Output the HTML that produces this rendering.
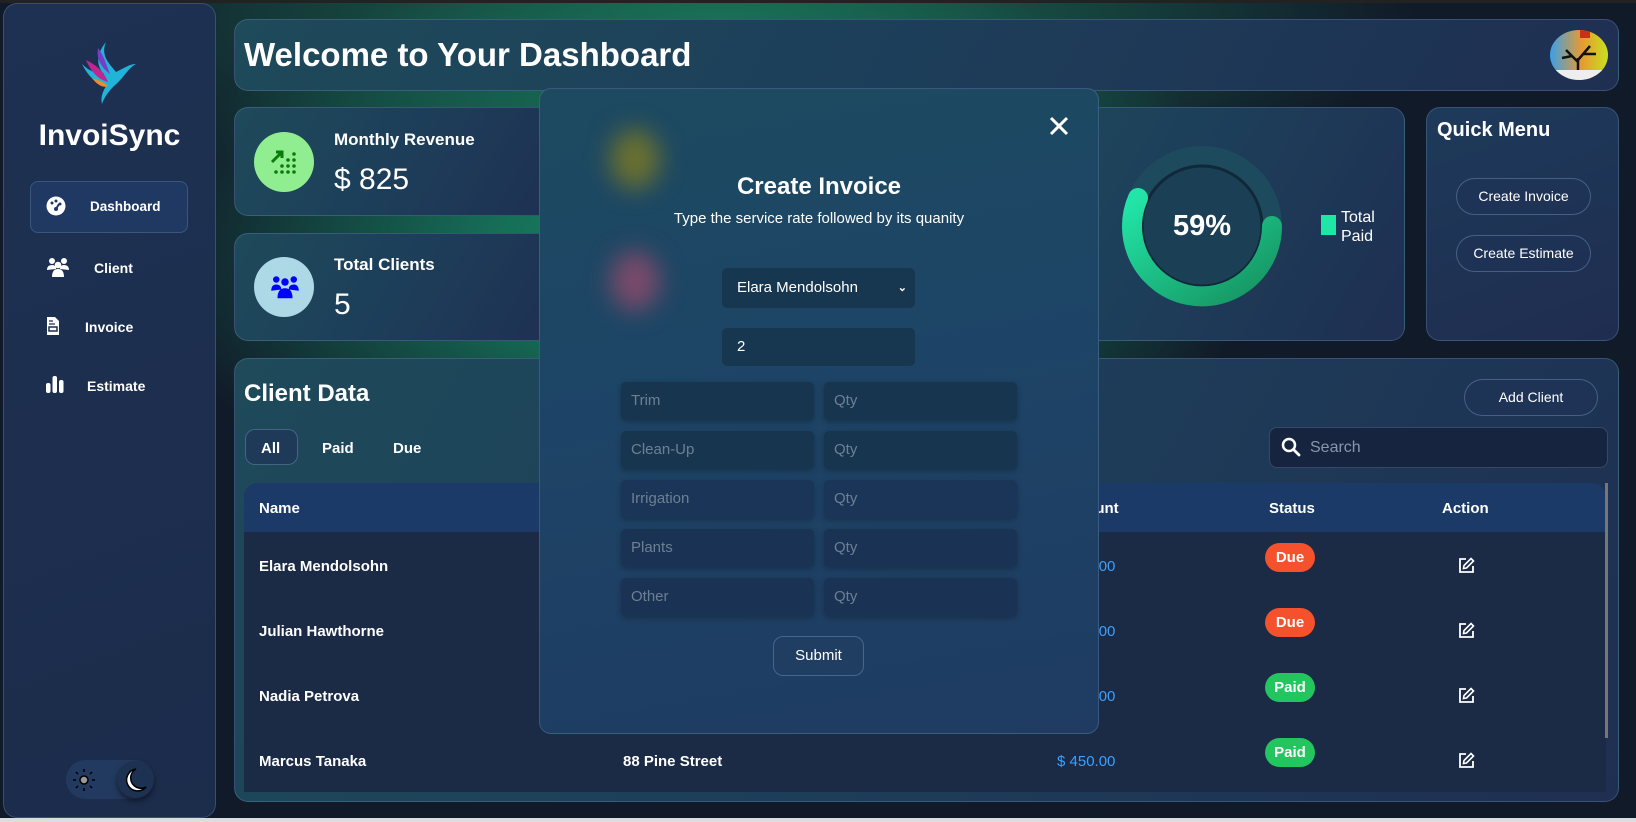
<!DOCTYPE html>
<html><head><meta charset="utf-8"><style>
*{box-sizing:border-box;margin:0;padding:0}
body{width:1636px;height:822px;overflow:hidden;font-family:"Liberation Sans",sans-serif;color:#fff;position:relative;
background:radial-gradient(ellipse 560px 300px at 700px 250px,#1a8060 0%,#167058 35%,rgba(16,24,38,0) 100%),radial-gradient(ellipse 700px 200px at 720px 20px,#1a7055,rgba(16,24,38,0)),#111a28;}
.abs{position:absolute}
.card{position:absolute;border:1px solid rgba(110,140,180,.35);border-radius:14px;background:linear-gradient(120deg,#1e4a5a 0%,#1d3f5a 45%,#1f2f52 100%)}
.sidebar{left:3px;top:3px;width:213px;height:815px;border-radius:14px;border:1px solid rgba(110,140,180,.35);background:linear-gradient(160deg,#1e3152,#1c2c4b)}
.nav{position:absolute;font-size:14px;font-weight:bold}
.btn{position:absolute;border:1px solid rgba(120,150,190,.45);border-radius:20px;font-size:14px;text-align:center;background:rgba(30,50,85,.5)}
.inp{position:absolute;border-radius:5px;background:#183550;color:#6c8092;font-size:15px;padding-left:10px;line-height:38px;height:38px;width:193px;box-shadow:0 2px 6px rgba(0,0,0,.25)}
.row{position:absolute;left:259px;font-size:15px;font-weight:bold}
.badge{position:absolute;left:1265px;width:50px;height:29px;border-radius:15px;font-size:15px;font-weight:bold;text-align:center;line-height:29px}
</style></head><body>
<div style="position:absolute;left:0;top:0;width:1636px;height:3px;background:#222"></div>
<div class="abs sidebar"></div>
<svg class="abs" style="left:76px;top:38px" width="68" height="68" viewBox="0 0 68 68">
<path d="M30 4 C24 18 34 26 40 34 C48 30 54 26 60 26 C52 30 48 40 38 48 C32 54 28 60 26 66 C24 58 28 52 30 48 C20 46 12 38 6 26 C14 34 22 36 28 36 C20 28 20 16 30 4Z" fill="#1fb4d8"/>
<path d="M10 22 C16 36 24 42 32 44 C28 34 22 28 10 22Z" fill="#c02690"/>
<path d="M16 40 C22 48 28 50 32 48 C28 44 22 42 16 40Z" fill="#f08a2c"/>
<path d="M22 10 C20 22 26 30 34 36 C30 26 28 18 22 10Z" fill="#7a3cc8"/>
</svg>
<div class="abs" style="left:0;width:219px;top:119px;text-align:center;font-size:30px;font-weight:bold">InvoiSync</div>
<div class="abs" style="left:30px;top:181px;width:158px;height:52px;border-radius:8px;background:#1f3963;border:1px solid rgba(110,140,180,.35)"></div>
<svg class="abs" style="left:46px;top:196px" width="20" height="20" viewBox="0 0 20 20"><circle cx="10" cy="10" r="9.5" fill="#fff"/><circle cx="6" cy="7" r="1.5" fill="#1f3963"/><circle cx="10" cy="5" r="1.5" fill="#1f3963"/><circle cx="14" cy="8" r="1.5" fill="#1f3963"/><path d="M10 13 L13 8" stroke="#1f3963" stroke-width="2"/><circle cx="10" cy="13" r="2" fill="#1f3963"/></svg>
<div class="nav" style="left:90px;top:199px;font-size:13.5px">Dashboard</div>
<svg class="abs" style="left:46px;top:257px" width="24" height="20" viewBox="0 0 24 20"><circle cx="6" cy="4" r="3" fill="#fff"/><circle cx="18" cy="4" r="3" fill="#fff"/><circle cx="12" cy="8" r="3.3" fill="#fff"/><path d="M1 13 Q1 8 6 8 Q10 8 10 12Z M14 12 Q14 8 18 8 Q23 8 23 13Z M6 20 Q6 12 12 12 Q18 12 18 20Z" fill="#fff"/></svg>
<div class="nav" style="left:94px;top:260px">Client</div>
<svg class="abs" style="left:46px;top:316px" width="14" height="20" viewBox="0 0 14 20"><path d="M1 1 H9 L13 5 V19 H1Z" fill="#fff"/><rect x="3" y="11" width="8" height="4" fill="none" stroke="#1e2f50" stroke-width="1.5"/><path d="M3 5 H7 M3 8 H9" stroke="#1e2f50" stroke-width="1.3"/></svg>
<div class="nav" style="left:85px;top:319px">Invoice</div>
<svg class="abs" style="left:46px;top:375px" width="18" height="18" viewBox="0 0 18 18"><rect x="0" y="8" width="4.5" height="10" rx="2" fill="#fff"/><rect x="6.5" y="1" width="4.5" height="17" rx="2" fill="#fff"/><rect x="13" y="5" width="4.5" height="13" rx="2" fill="#fff"/></svg>
<div class="nav" style="left:87px;top:378px">Estimate</div>
<div class="abs" style="left:66px;top:760px;width:88px;height:39px;border-radius:20px;background:#233a60"></div>
<svg class="abs" style="left:72px;top:768px" width="24" height="24" viewBox="0 0 24 24"><circle cx="12" cy="12" r="4" fill="#999" stroke="#000" stroke-width="1.5"/><g stroke="#000" stroke-width="1.5"><path d="M12 1v3M12 20v3M1 12h3M20 12h3M4 4l2 2M18 18l2 2M4 20l2-2M18 6l2-2"/></g></svg>
<div class="abs" style="left:117px;top:761px;width:37px;height:37px;border-radius:50%;background:#1d3152;box-shadow:0 3px 6px rgba(0,0,0,.5)"></div>
<svg class="abs" style="left:124px;top:767px" width="24" height="26" viewBox="0 0 24 26"><path d="M12 2 A11 11 0 1 0 22 20 A10 10 0 0 1 12 2Z" fill="#fff" stroke="#000" stroke-width="1.5"/></svg>

<div class="card" style="left:234px;top:19px;width:1385px;height:72px"></div>
<div class="abs" style="left:244px;top:36px;font-size:33px;font-weight:bold">Welcome to Your Dashboard</div>
<div class="abs" style="left:1550px;top:30px;width:58px;height:50px;border-radius:50%;background:linear-gradient(90deg,#3aa0e8 0%,#e89a30 55%,#c8e020 100%);overflow:hidden"><svg width="58" height="50" viewBox="0 0 58 50"><path d="M28 50 V28 M28 32 L16 20 M28 30 L40 16 M22 26 L12 28 M34 24 L46 24" stroke="#111" stroke-width="2.5"/><rect x="30" y="0" width="10" height="8" fill="#c8301a"/><rect x="0" y="40" width="58" height="10" fill="#eee"/></svg></div>

<div class="card" style="left:234px;top:107px;width:338px;height:109px"></div>
<div class="abs" style="left:254px;top:132px;width:60px;height:60px;border-radius:50%;background:#90ee90"></div>
<svg class="abs" style="left:270px;top:148px" width="30" height="28" viewBox="0 0 30 28"><path d="M2 14 L12 4 M6 4 H12 V10" stroke="#0a7a0a" stroke-width="3" fill="none"/><g fill="#0a7a0a"><circle cx="24" cy="6" r="1.8"/><circle cx="24" cy="12" r="1.8"/><circle cx="18" cy="12" r="1.8"/><circle cx="24" cy="18" r="1.8"/><circle cx="18" cy="18" r="1.8"/><circle cx="12" cy="18" r="1.8"/><circle cx="24" cy="24" r="1.8"/><circle cx="18" cy="24" r="1.8"/><circle cx="12" cy="24" r="1.8"/><circle cx="6" cy="24" r="1.8"/></g></svg>
<div class="abs" style="left:334px;top:130px;font-size:17px;font-weight:bold">Monthly Revenue</div>
<div class="abs" style="left:334px;top:163px;font-size:30px">$ 825</div>
<div class="card" style="left:234px;top:233px;width:338px;height:108px"></div>
<div class="abs" style="left:254px;top:257px;width:60px;height:60px;border-radius:50%;background:#add8e6"></div>
<svg class="abs" style="left:270px;top:273px" width="30" height="28" viewBox="0 0 24 20"><circle cx="5" cy="4" r="2.6" fill="#00f"/><circle cx="19" cy="4" r="2.6" fill="#00f"/><circle cx="12" cy="6" r="3" fill="#00f"/><path d="M1 13 Q1 8 5 8 Q9 8 9 12Z M15 12 Q15 8 19 8 Q23 8 23 13Z M6 19 Q6 11 12 11 Q18 11 18 19Z" fill="#00f"/></svg>
<div class="abs" style="left:334px;top:255px;font-size:17px;font-weight:bold">Total Clients</div>
<div class="abs" style="left:334px;top:288px;font-size:30px">5</div>
<div class="card" style="left:593px;top:107px;width:351px;height:109px"></div>
<div class="card" style="left:593px;top:233px;width:351px;height:108px"></div>
<div class="card" style="left:960px;top:107px;width:445px;height:234px"></div>
<svg class="abs" style="left:1116px;top:140px" width="172" height="172" viewBox="0 0 172 172">
<defs><linearGradient id="g" x1="0" y1="0" x2="1" y2="1"><stop offset="0" stop-color="#22e6a8"/><stop offset="1" stop-color="#16905e"/></linearGradient></defs>
<circle cx="86" cy="86" r="70" fill="none" stroke="#1d4a5c" stroke-width="20"/>
<circle cx="86" cy="86" r="60" fill="#1b4055" stroke="#10283a" stroke-width="3"/>
<path d="M22 58 A70 70 0 1 0 156 86" fill="none" stroke="url(#g)" stroke-width="20" stroke-linecap="round"/>
</svg>
<div class="abs" style="left:1160px;top:210px;width:84px;text-align:center;font-size:29px;font-weight:bold">59%</div>
<div class="abs" style="left:1321px;top:215px;width:15px;height:20px;background:#1ee6a6"></div>
<div class="abs" style="left:1341px;top:208px;font-size:16px;line-height:19px">Total<br>Paid</div>
<div class="card" style="left:1426px;top:107px;width:193px;height:234px;background:linear-gradient(160deg,#1e3a5a,#1f2d50)"></div>
<div class="abs" style="left:1437px;top:119px;font-size:20px;font-weight:bold">Quick Menu</div>
<div class="btn" style="left:1456px;top:178px;width:135px;height:37px;line-height:35px">Create Invoice</div>
<div class="btn" style="left:1456px;top:235px;width:135px;height:37px;line-height:35px">Create Estimate</div>

<div class="card" style="left:234px;top:358px;width:1385px;height:444px"></div>
<div class="abs" style="left:244px;top:380px;font-size:24px;font-weight:bold">Client Data</div>
<div class="btn" style="left:1464px;top:379px;width:134px;height:37px;line-height:35px">Add Client</div>
<div class="abs" style="left:1269px;top:427px;width:339px;height:41px;border-radius:8px;background:#172440;border:1px solid rgba(110,140,180,.35)"></div>
<svg class="abs" style="left:1281px;top:437px" width="20" height="20" viewBox="0 0 20 20"><circle cx="8" cy="8" r="6" stroke="#fff" stroke-width="2.5" fill="none"/><path d="M12.5 12.5 L18 18" stroke="#fff" stroke-width="2.8" stroke-linecap="round"/></svg>
<div class="abs" style="left:1310px;top:439px;font-size:16px;color:#8a96a8">Search</div>
<div class="abs" style="left:245px;top:429px;width:53px;height:36px;border-radius:10px;border:1px solid rgba(120,150,190,.45);background:#1e3a58"></div>
<div class="abs" style="left:261px;top:440px;font-size:15px;font-weight:bold">All</div>
<div class="abs" style="left:322px;top:440px;font-size:15px;font-weight:bold">Paid</div>
<div class="abs" style="left:393px;top:440px;font-size:15px;font-weight:bold">Due</div>
<div class="abs" style="left:244px;top:483px;width:1362px;height:309px;background:#1b2a45;border-radius:14px 14px 0 0"></div>
<div class="abs" style="left:244px;top:483px;width:1362px;height:49px;background:#1c3a68;border-radius:14px 14px 0 0"></div>
<div class="abs" style="left:1605px;top:483px;width:3px;height:255px;background:#777"></div>
<div class="row" style="top:500px">Name</div>
<div class="abs" style="left:1269px;top:500px;font-size:15px;font-weight:bold">Status</div>
<div class="abs" style="left:1442px;top:500px;font-size:15px;font-weight:bold">Action</div>
<div class="abs" style="left:1062px;top:500px;font-size:15px;font-weight:bold">Amount</div>
<div class="row" style="top:558px">Elara Mendolsohn</div>
<div class="row" style="top:623px">Julian Hawthorne</div>
<div class="row" style="top:688px">Nadia Petrova</div>
<div class="row" style="top:753px">Marcus Tanaka</div>
<div class="abs" style="left:623px;top:753px;font-size:15px;font-weight:bold">88 Pine Street</div>
<div class="abs" style="left:1057px;top:558px;font-size:15px;color:#3aa0ff">$ 250.00</div>
<div class="abs" style="left:1057px;top:623px;font-size:15px;color:#3aa0ff">$ 300.00</div>
<div class="abs" style="left:1057px;top:688px;font-size:15px;color:#3aa0ff">$ 500.00</div>
<div class="abs" style="left:1057px;top:753px;font-size:15px;color:#3aa0ff">$ 450.00</div>
<div class="badge" style="top:543px;background:#f4512c">Due</div>
<div class="badge" style="top:608px;background:#f4512c">Due</div>
<div class="badge" style="top:673px;background:#22c55e">Paid</div>
<div class="badge" style="top:738px;background:#22c55e">Paid</div>
<svg class="abs" style="left:1458px;top:557px" width="17" height="17" viewBox="0 0 17 17"><path d="M8 2 H2 V15 H15 V9" fill="none" stroke="#fff" stroke-width="1.8"/><path d="M13 1.5 L15.5 4 L8.5 11 L5.5 11.5 L6 8.5Z" fill="none" stroke="#fff" stroke-width="1.6"/></svg>
<svg class="abs" style="left:1458px;top:622px" width="17" height="17" viewBox="0 0 17 17"><path d="M8 2 H2 V15 H15 V9" fill="none" stroke="#fff" stroke-width="1.8"/><path d="M13 1.5 L15.5 4 L8.5 11 L5.5 11.5 L6 8.5Z" fill="none" stroke="#fff" stroke-width="1.6"/></svg>
<svg class="abs" style="left:1458px;top:687px" width="17" height="17" viewBox="0 0 17 17"><path d="M8 2 H2 V15 H15 V9" fill="none" stroke="#fff" stroke-width="1.8"/><path d="M13 1.5 L15.5 4 L8.5 11 L5.5 11.5 L6 8.5Z" fill="none" stroke="#fff" stroke-width="1.6"/></svg>
<svg class="abs" style="left:1458px;top:752px" width="17" height="17" viewBox="0 0 17 17"><path d="M8 2 H2 V15 H15 V9" fill="none" stroke="#fff" stroke-width="1.8"/><path d="M13 1.5 L15.5 4 L8.5 11 L5.5 11.5 L6 8.5Z" fill="none" stroke="#fff" stroke-width="1.6"/></svg>

<!-- modal -->
<div class="abs" style="left:539px;top:88px;width:560px;height:646px;border-radius:12px;border:1px solid rgba(110,140,180,.35);background:linear-gradient(170deg,#1d4a60 0%,#1d4566 40%,#1f3b62 100%);overflow:hidden">
<div class="abs" style="left:70px;top:40px;width:50px;height:60px;border-radius:50%;background:#6a7030;filter:blur(12px)"></div>
<div class="abs" style="left:70px;top:162px;width:50px;height:60px;border-radius:50%;background:#7a4a6a;filter:blur(12px)"></div>
</div>
<svg class="abs" style="left:1049px;top:116px" width="20" height="20" viewBox="0 0 20 20"><path d="M2 2 L18 18 M18 2 L2 18" stroke="#fff" stroke-width="3"/></svg>
<div class="abs" style="left:539px;top:173px;width:560px;text-align:center;font-size:24px;font-weight:bold">Create Invoice</div>
<div class="abs" style="left:539px;top:210px;width:560px;text-align:center;font-size:15px">Type the service rate followed by its quanity</div>
<div class="abs" style="left:722px;top:268px;width:193px;height:40px;border-radius:5px;background:#173650;font-size:15px;line-height:40px;padding-left:15px">Elara Mendolsohn<span style="position:absolute;right:8px;font-size:11px;font-weight:bold">&#8964;</span></div>
<div class="abs" style="left:722px;top:328px;width:193px;height:38px;border-radius:5px;background:#173650;font-size:15px;line-height:38px;padding-left:15px">2</div>
<div class="inp" style="left:621px;top:382px">Trim</div><div class="inp" style="left:824px;top:382px">Qty</div>
<div class="inp" style="left:621px;top:431px">Clean-Up</div><div class="inp" style="left:824px;top:431px">Qty</div>
<div class="inp" style="left:621px;top:480px;background:#1a3558">Irrigation</div><div class="inp" style="left:824px;top:480px;background:#1a3558">Qty</div>
<div class="inp" style="left:621px;top:529px;background:#1a3354">Plants</div><div class="inp" style="left:824px;top:529px;background:#1a3354">Qty</div>
<div class="inp" style="left:621px;top:578px;background:#1a3354">Other</div><div class="inp" style="left:824px;top:578px;background:#1a3354">Qty</div>
<div class="abs" style="left:773px;top:636px;width:91px;height:40px;border-radius:10px;border:1px solid rgba(120,150,190,.45);background:#203e62;font-size:15px;text-align:center;line-height:38px">Submit</div>
<div class="abs" style="left:0;top:818px;width:1636px;height:4px;background:#ddd"></div>
</body></html>
